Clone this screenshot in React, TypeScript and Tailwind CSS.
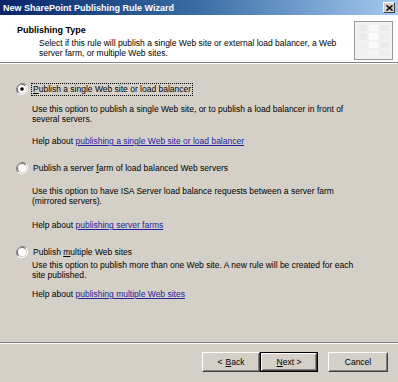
import React from 'react';

function Radio({ checked }: { checked?: boolean }) {
  return (
    <svg width="12" height="12" viewBox="0 0 12 12" className="shrink-0">
      <path d="M10.2 1.8 A6 6 0 0 0 1.8 10.2" fill="none" stroke="#808080" strokeWidth="1" />
      <path d="M9.4 2.6 A4.9 4.9 0 0 0 2.6 9.4" fill="none" stroke="#404040" strokeWidth="1" />
      <path d="M1.8 10.2 A6 6 0 0 0 10.2 1.8" fill="none" stroke="#ffffff" strokeWidth="1" />
      <path d="M2.6 9.4 A4.9 4.9 0 0 0 9.4 2.6" fill="none" stroke="#d4d0c8" strokeWidth="1" />
      <circle cx="6" cy="6" r="4" fill="#ffffff" />
      {checked && <circle cx="6" cy="6" r="1.8" fill="#000000" />}
    </svg>
  );
}

function Option({
  checked,
  label,
  lines,
  link,
  descGap,
  helpGap,
}: {
  checked?: boolean;
  label: React.ReactNode;
  lines: string[];
  link: string;
  descGap: string;
  helpGap: string;
}) {
  return (
    <div>
      <div className="flex items-center h-[12px] pl-[16px]">
        <Radio checked={checked} />
        <span
          className={
            'ml-[4px] px-[1px] leading-[11px] ' +
            (checked ? 'outline outline-1 outline-dotted outline-[#000]' : '')
          }
        >
          {label}
        </span>
      </div>
      <div className={'pl-[32px] ' + descGap}>
        {lines.map((l) => (
          <div key={l} className="leading-[10px]">
            {l}
          </div>
        ))}
      </div>
      <div className={'pl-[32px] leading-[10px] ' + helpGap}>
        Help about <span className="text-[#2323a0] underline">{link}</span>
      </div>
    </div>
  );
}

function Button({
  children,
  primary,
  width,
}: {
  children: React.ReactNode;
  primary?: boolean;
  width: string;
}) {
  return (
    <div className={'h-[20px] flex ' + width + (primary ? ' border border-black' : '')}>
      <div className="flex-1 flex border border-t-white border-l-white border-b-[#404040] border-r-[#404040]">
        <div className="flex-1 border border-t-[#d4d0c8] border-l-[#d4d0c8] border-b-[#808080] border-r-[#808080] flex items-center justify-center">
          {children}
        </div>
      </div>
    </div>
  );
}

export default function App() {
  return (
    <div
      className="w-[398px] h-[382px] bg-[#d4d0c8] flex flex-col text-[8.5px] text-black overflow-hidden"
      style={{ fontFamily: '"Liberation Sans", Arial, sans-serif' }}
    >
      <div className="h-[15px] bg-gradient-to-r from-[#0a246a] via-[#3a6ea5] to-[#a6caf0] flex items-center justify-between pl-[3px] pr-[3px]">
        <span className="text-white font-bold text-[9px] leading-[12px]">
          New SharePoint Publishing Rule Wizard
        </span>
        <div className="w-[12px] h-[11px] bg-[#d4d0c8] border border-t-white border-l-white border-b-[#404040] border-r-[#404040] flex items-center justify-center">
          <svg width="7" height="6" viewBox="0 0 7 6">
            <path d="M0.5 0.5 L6.5 5.5 M6.5 0.5 L0.5 5.5" stroke="#000" strokeWidth="1.5" />
          </svg>
        </div>
      </div>

      <div className="h-[48px] bg-white flex justify-between border-b border-[#808080]">
        <div className="pl-[17px] pt-[10px]">
          <div className="font-bold text-[9px] leading-[11px]">Publishing Type</div>
          <div className="pl-[22px] mt-[2px]">
            <div className="leading-[10px]">
              Select if this rule will publish a single Web site or external load balancer, a Web
            </div>
            <div className="leading-[10px]">server farm, or multiple Web sites.</div>
          </div>
        </div>
        <div className="mt-[6px] mr-[5px] w-[39px] h-[39px] border border-[#9a9a9a] bg-[#f2f2f2] grid grid-cols-3 grid-rows-4 gap-[2px] p-[3px]">
          <div className="bg-[#ebebeb]" />
          <div className="bg-[#f8f8f8]" />
          <div className="bg-[#e9e9e9]" />
          <div className="bg-[#ebebeb]" />
          <div className="bg-[#fcfcfc]" />
          <div className="bg-[#eeeeee]" />
          <div className="bg-[#efefef]" />
          <div className="bg-[#fbfbfb]" />
          <div className="bg-[#eaeaea]" />
          <div className="bg-[#f0f0f0]" />
          <div className="bg-[#f6f6f6]" />
          <div className="bg-[#ededed]" />
        </div>
      </div>
      <div className="h-px bg-white" />

      <div className="flex-1 pt-[19px] flex flex-col">
        <Option
          checked
          label={
            <>
              <span className="underline">P</span>ublish a single Web site or load balancer
            </>
          }
          lines={[
            'Use this option to publish a single Web site, or to publish a load balancer in front of',
            'several servers.',
          ]}
          link="publishing a single Web site or load balancer"
          descGap="mt-[9px]"
          helpGap="mt-[12px]"
        />
        <div className="mt-[16px]">
          <Option
            label={
              <>
                Publish a server <span className="underline">f</span>arm of load balanced Web servers
              </>
            }
            lines={[
              'Use this option to have ISA Server load balance requests between a server farm',
              '(mirrored servers).',
            ]}
            link="publishing server farms"
            descGap="mt-[12px]"
            helpGap="mt-[14px]"
          />
        </div>
        <div className="mt-[16px]">
          <Option
            label={
              <>
                Publish <span className="underline">m</span>ultiple Web sites
              </>
            }
            lines={[
              'Use this option to publish more than one Web site. A new rule will be created for each',
              'site published.',
            ]}
            link="publishing multiple Web sites"
            descGap="mt-[2px]"
            helpGap="mt-[9px]"
          />
        </div>
      </div>

      <div className="h-px bg-[#808080]" />
      <div className="h-px bg-white" />
      <div className="h-[38px] flex items-start justify-end gap-0 pt-[8px] pr-[10px]">
        <Button width="w-[58px]">
          &lt; <span className="underline ml-[3px]">B</span>ack
        </Button>
        <Button width="w-[58px]" primary>
          <span className="underline">N</span>ext &gt;
        </Button>
        <div className="w-[10px]" />
        <Button width="w-[60px]">Cancel</Button>
      </div>
    </div>
  );
}
